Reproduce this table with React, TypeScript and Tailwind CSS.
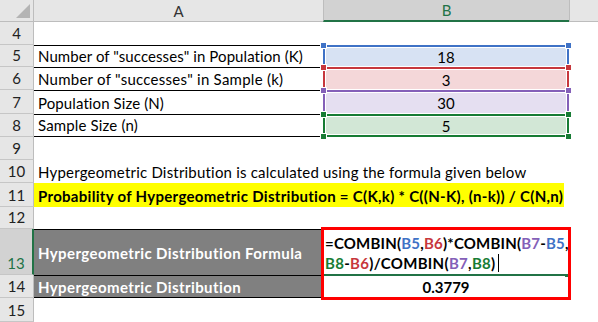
import React from "react";

type RowProps = {
  n: number;
  h: string;
  sel?: boolean;
  aClass?: string;
  a?: React.ReactNode;
  bClass?: string;
  b?: React.ReactNode;
};

function Row({ n, h, sel, aClass, a, bClass, b }: RowProps) {
  return (
    <div className={`flex ${h}`}>
      <div
        className={
          sel
            ? "w-[34px] shrink-0 bg-[#d2d2d2] border-r-2 border-r-[#217346] border-b border-b-[#c6c6c6] flex items-end justify-center pb-[1px] text-[#217346]"
            : "w-[34px] shrink-0 bg-[#e6e6e6] border-r border-r-[#bdbdbd] border-b border-b-[#c6c6c6] flex items-end justify-center pb-[1px] text-[#222]"
        }
      >
        {n}
      </div>
      <div className={`w-[289px] shrink-0 flex items-end pl-1 pb-[1px] whitespace-nowrap ${aClass ?? ""}`}>{a}</div>
      <div className={`w-[246px] shrink-0 relative ${bClass ?? ""}`}>{b}</div>
      <div className="flex-1" />
    </div>
  );
}

function Handle({ pos, color }: { pos: string; color: string }) {
  return <div className={`absolute w-[7px] h-[7px] border border-white z-10 ${pos} ${color}`} />;
}

function BVal({
  v,
  border,
  fill,
  handle,
  last,
}: {
  v: string;
  border: string;
  fill: string;
  handle: string;
  last?: boolean;
}) {
  return (
    <div className={`h-full relative border-t-2 border-x-2 ${last ? "border-b-2" : ""} ${border} p-px bg-white`}>
      <div className={`h-full flex items-center justify-center ${fill}`}>{v}</div>
      <Handle pos="left-[-5px] top-[-5px]" color={handle} />
      <Handle pos="right-[-5px] top-[-5px]" color={handle} />
      {last && <Handle pos="left-[-5px] bottom-[-5px]" color={handle} />}
      {last && <Handle pos="right-[-5px] bottom-[-5px]" color={handle} />}
    </div>
  );
}

export default function App() {
  return (
    <div className="w-[598px] h-[322px] overflow-hidden bg-white font-['Lato',sans-serif] text-[15px] leading-[20px] text-black">
      {/* header */}
      <div className="flex h-[22px]">
        <div className="w-[34px] shrink-0 bg-[#e6e6e6] border-r border-b border-[#bdbdbd] relative">
          <svg className="absolute right-[3px] bottom-[3px]" width="14" height="14" viewBox="0 0 14 14">
            <polygon points="14,0 14,14 0,14" fill="#b4b4b4" />
          </svg>
        </div>
        <div className="w-[289px] shrink-0 bg-[#e6e6e6] border-b border-[#bdbdbd] flex items-center justify-center text-[#333]">
          A
        </div>
        <div className="w-[246px] shrink-0 bg-[#d2d2d2] border-l border-[#bdbdbd] border-b-2 border-b-[#217346] flex items-center justify-center text-[#217346]">
          B
        </div>
        <div className="flex-1 bg-[#e6e6e6] border-l border-[#bdbdbd] border-b border-b-[#bdbdbd]" />
      </div>

      <Row n={4} h="h-[23px]" />
      <Row
        n={5}
        h="h-[22px]"
        aClass="border-t border-black tracking-[0.08px]"
        a={'Number of "successes" in Population (K)'}
        b={<BVal v="18" border="border-[#3f72c6]" fill="bg-[#d7e2f3]" handle="bg-[#3f72c6]" />}
      />
      <Row
        n={6}
        h="h-[23px]"
        aClass="border-t border-black tracking-[0.25px]"
        a={'Number of "successes" in Sample (k)'}
        b={<BVal v="3" border="border-[#c7373d]" fill="bg-[#f4d7d9]" handle="bg-[#c7373d]" />}
      />
      <Row
        n={7}
        h="h-[24px]"
        aClass="border-t border-black tracking-[0.1px]"
        a="Population Size (N)"
        b={<BVal v="30" border="border-[#8460b8]" fill="bg-[#e5dff1]" handle="bg-[#8460b8]" />}
      />
      <Row
        n={8}
        h="h-[23px]"
        aClass="border-y border-black tracking-[0.15px]"
        a="Sample Size (n)"
        b={<BVal v="5" border="border-[#177c34]" fill="bg-[#d2e7d6]" handle="bg-[#177c34]" last />}
      />
      <Row n={9} h="h-[23px]" />
      <Row
        n={10}
        h="h-[23px]"
        a={<span>Hypergeometric Distribution is calculated using the formula given below</span>}
        aClass="overflow-visible tracking-[0.2px]"
      />
      <div className="flex h-[24px]">
        <div className="w-[34px] shrink-0 bg-[#e6e6e6] border-r border-r-[#bdbdbd] border-b border-b-[#c6c6c6] flex items-end justify-center pb-[1px] text-[#222]">
          11
        </div>
        <div className="w-[530px] shrink-0 bg-[#ffff00] flex items-end pl-1 pb-[1px] font-bold whitespace-nowrap tracking-[0.3px]">
          Probability of Hypergeometric Distribution = C(K,k) * C((N-K), (n-k)) / C(N,n)
        </div>
        <div className="flex-1" />
      </div>
      <Row n={12} h="h-[22px]" />

      {/* row 13 */}
      <div className="flex h-[46px]">
        <div className="w-[34px] shrink-0 bg-[#d2d2d2] border-r-2 border-r-[#217346] border-b border-b-[#c6c6c6] flex items-end justify-center pb-[1px] text-[#217346]">
          13
        </div>
        <div className="w-[289px] shrink-0 bg-[#808080] border-t border-black flex items-center pl-1 font-bold text-white whitespace-nowrap tracking-[0.4px]">
          Hypergeometric Distribution Formula
        </div>
        <div className="w-[246px] shrink-0 relative">
          <div className="absolute left-[-2px] top-[-2px] w-[250px] h-[73px] border-[3px] border-[#ff0000] z-20 pointer-events-none" />
          <div className="pl-[2px] pt-[4px] font-bold leading-[20px] whitespace-nowrap">
            <div className="tracking-[0.2px]">
              =COMBIN(<span className="text-[#3f72c6]">B5</span>,<span className="text-[#c7373d]">B6</span>)*COMBIN(
              <span className="text-[#8460b8]">B7</span>-<span className="text-[#3f72c6]">B5</span>,
            </div>
            <div className="flex items-center tracking-[0.3px]">
              <span className="text-[#177c34]">B8</span>-<span className="text-[#c7373d]">B6</span>)/COMBIN(
              <span className="text-[#8460b8]">B7</span>,<span className="text-[#177c34]">B8</span>)
              <span className="inline-block w-px h-[18px] bg-black ml-[2px]" />
            </div>
          </div>
          <div className="absolute left-[1px] right-[4px] bottom-[-1px] h-[2px] bg-[#217346]" />
          <div className="absolute right-[1px] bottom-[-2px] w-[3px] h-[3px] bg-[#217346]" />
        </div>
        <div className="flex-1" />
      </div>

      {/* row 14 */}
      <div className="flex h-[23px]">
        <div className="w-[34px] shrink-0 bg-[#e6e6e6] border-r border-r-[#bdbdbd] border-b border-b-[#c6c6c6] flex items-end justify-center pb-[1px] text-[#222]">
          14
        </div>
        <div className="w-[289px] shrink-0 bg-[#808080] border-y border-black flex items-center pl-1 font-bold text-white whitespace-nowrap tracking-[0.4px]">
          Hypergeometric Distribution
        </div>
        <div className="w-[246px] shrink-0 flex items-center justify-center font-bold">0.3779</div>
        <div className="flex-1" />
      </div>
      <Row n={15} h="h-[24px]" />
    </div>
  );
}
